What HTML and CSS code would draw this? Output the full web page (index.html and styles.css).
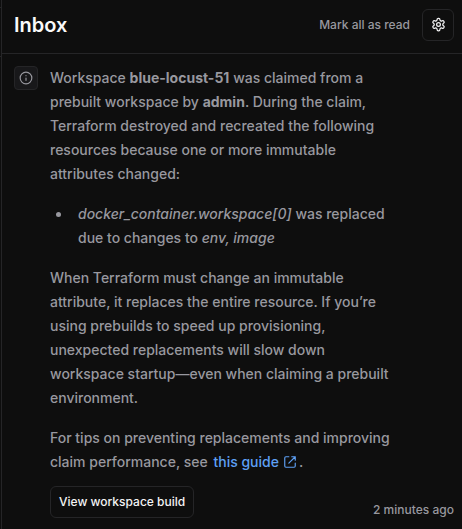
FILE: index.html
```html
<!DOCTYPE html>
<html lang="en">
<head>
<meta charset="utf-8">
<title>Inbox</title>
<link rel="stylesheet" href="styles.css">
</head>
<body>
<main class="inbox">
  <header class="header">
    <h1>Inbox</h1>
    <div class="actions">
      <span class="mark">Mark all as read</span>
      <button class="settings" aria-label="Settings">
        <svg width="15" height="15" viewBox="0 0 24 24" fill="none" stroke="currentColor" stroke-width="2" stroke-linecap="round" stroke-linejoin="round"><path d="M12.22 2h-.44a2 2 0 0 0-2 2v.18a2 2 0 0 1-1 1.73l-.43.25a2 2 0 0 1-2 0l-.15-.08a2 2 0 0 0-2.73.73l-.22.38a2 2 0 0 0 .73 2.73l.15.1a2 2 0 0 1 1 1.72v.51a2 2 0 0 1-1 1.74l-.15.09a2 2 0 0 0-.73 2.73l.22.38a2 2 0 0 0 2.73.73l.15-.08a2 2 0 0 1 2 0l.43.25a2 2 0 0 1 1 1.73V20a2 2 0 0 0 2 2h.44a2 2 0 0 0 2-2v-.18a2 2 0 0 1 1-1.73l.43-.25a2 2 0 0 1 2 0l.15.08a2 2 0 0 0 2.73-.73l.22-.39a2 2 0 0 0-.73-2.73l-.15-.08a2 2 0 0 1-1-1.74v-.5a2 2 0 0 1 1-1.74l.15-.09a2 2 0 0 0 .73-2.73l-.22-.38a2 2 0 0 0-2.73-.73l-.15.08a2 2 0 0 1-2 0l-.43-.25a2 2 0 0 1-1-1.73V4a2 2 0 0 0-2-2z"/><circle cx="12" cy="12" r="3"/></svg>
      </button>
    </div>
  </header>
  <article class="item">
    <div class="avatar">
      <svg width="14" height="14" viewBox="0 0 24 24" fill="none" stroke="currentColor" stroke-width="2" stroke-linecap="round" stroke-linejoin="round"><circle cx="12" cy="12" r="10"/><path d="M12 16v-4M12 8h.01"/></svg>
    </div>
    <div class="content">
      <p>Workspace <strong>blue-locust-51</strong> was claimed from a<br>prebuilt workspace by <strong>admin</strong>. During the claim,<br>Terraform destroyed and recreated the following<br>resources because one or more immutable<br>attributes changed:</p>
      <ul>
        <li><em>docker_container.workspace[0]</em> was replaced<br>due to changes to <em>env, image</em></li>
      </ul>
      <p>When Terraform must change an immutable<br>attribute, it replaces the entire resource. If you’re<br>using prebuilds to speed up provisioning,<br>unexpected replacements will slow down<br>workspace startup—even when claiming a prebuilt<br>environment.</p>
      <p>For tips on preventing replacements and improving<br>claim performance, see <a class="link">this guide<svg class="ext" width="14" height="14" viewBox="0 0 24 24" fill="none" stroke="currentColor" stroke-width="2" stroke-linecap="round" stroke-linejoin="round"><path d="M15 3h6v6M10 14 21 3M21 14v5a2 2 0 0 1-2 2H5a2 2 0 0 1-2-2V5a2 2 0 0 1 2-2h5"/></svg></a>.</p>
      <button class="build">View workspace build</button>
    </div>
    <time class="time">2 minutes ago</time>
  </article>
</main>
</body>
</html>
```
FILE: styles.css
```css
* { box-sizing: border-box; }
body {
  margin: 0;
  background: #0e0e0e;
  color: #98989f;
  font: 500 14px/24px Inter, sans-serif;
}
/* Ends of the rules of the panel behind the inbox */
body {
  background-image: linear-gradient(#252527, #252527), linear-gradient(#252527, #252527);
  background-size: 1px 1px;
  background-position: 0 7px, 0 56px;
  background-repeat: no-repeat;
}
.inbox {
  height: 529px;
  overflow: hidden;
  margin-left: 1px;
  border-left: 1px solid #252527;
}
.header {
  display: flex;
  align-items: center;
  justify-content: space-between;
  height: 54px;
  padding: 0 8px 4px 12px;
  border-bottom: 1px solid #252527;
}
h1 { margin: 0; color: #fafafa; font-size: 20px; font-weight: 600; }
.actions { display: flex; align-items: center; gap: 12px; }
.mark { font-size: 12px; }
button {
  background: transparent;
  border: 1px solid #252527;
  border-radius: 6px;
  color: #f4f4f5;
  font: 500 12px/24px Inter, sans-serif;
}
.settings {
  display: flex;
  align-items: center;
  justify-content: center;
  width: 32px;
  height: 32px;
  padding: 0;
}
.item { display: flex; padding: 12px 7px 0 12px; height: 475px; }
.avatar {
  display: flex;
  align-items: center;
  justify-content: center;
  flex: none;
  width: 24px;
  height: 24px;
  border: 1px solid #252527;
  border-radius: 4px;
  background: #18181a;
}
.content { flex: none; width: 348px; margin-left: 12px; white-space: nowrap; }
p, ul { margin: 0 0 16px; }
ul { padding-left: 28px; list-style: none; }
li::before {
  content: "";
  float: left;
  width: 5px;
  height: 5px;
  margin: 10px 0 0 -22px;
  border-radius: 50%;
  background: currentColor;
}
strong { font-weight: 700; }
.link { margin-left: 2px; margin-right: 2px; color: #5ea0f5; }
.ext { margin-left: 4px; vertical-align: -2px; }
.build { display: block; margin-top: -4px; height: 32px; padding: 0 8px; }
.time { align-self: flex-end; margin: 0 0 7px -25px; font-size: 12px; white-space: nowrap; }
```
